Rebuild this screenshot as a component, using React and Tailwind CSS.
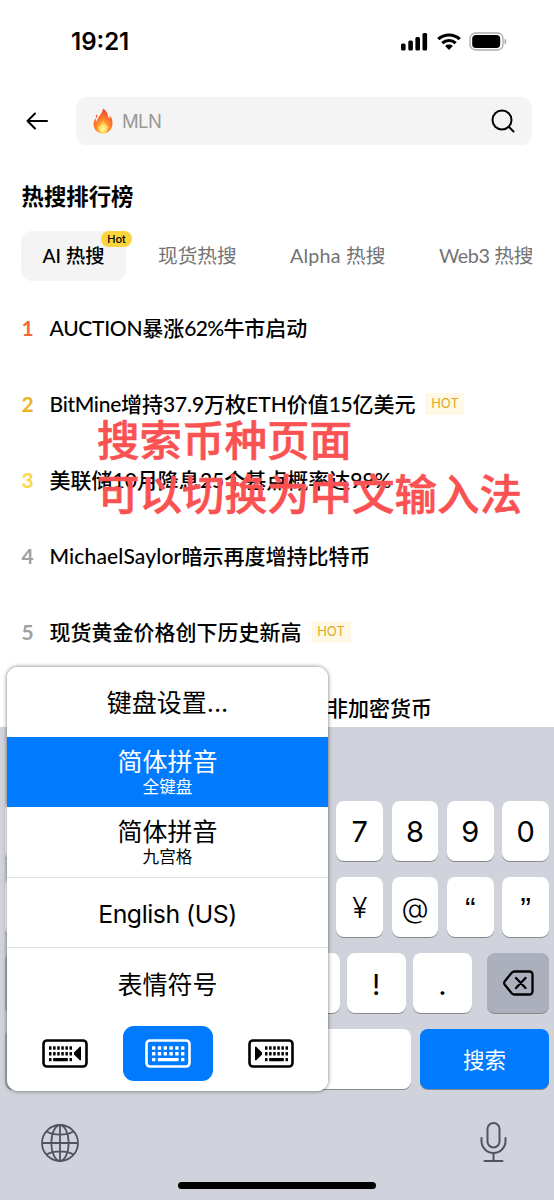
const hotTopics = [
  {
    rank: 1,
    color: 'text-[#f5693c]',
    parts: [
      ['AUCTION', 'tracking-[-0.3px]'],
      ['暴涨', ''],
      ['62%', 'tracking-[-0.7px]'],
      ['牛市启动', ''],
    ],
  },
  {
    rank: 2,
    color: 'text-[#eab41f]',
    hot: true,
    parts: [
      ['BitMine', 'tracking-[-0.3px]'],
      ['增持', ''],
      ['37.9', 'tracking-[-0.1px]'],
      ['万枚', ''],
      ['ETH', ''],
      ['价值', ''],
      ['15', 'tracking-[-0.3px]'],
      ['亿美元', ''],
    ],
  },
  {
    rank: 3,
    color: 'text-[#f8d748]',
    parts: [
      ['美联储', ''],
      ['10', ''],
      ['月降息', ''],
      ['25', ''],
      ['个基点概率达', ''],
      ['99%', ''],
    ],
  },
  {
    rank: 4,
    color: 'text-[#a0a0a0]',
    parts: [
      ['MichaelSaylor', 'tracking-[0.15px]'],
      ['暗示再度增持比特币', ''],
    ],
  },
  {
    rank: 5,
    color: 'text-[#a0a0a0]',
    hot: true,
    parts: [['现货黄金价格创下历史新高', '']],
  },
  {
    color: 'text-[#a0a0a0]',
    parts: [['非加密货币', 'ml-[305.5px]']],
  },
];

const StatusBar = () => (
  <div className="flex h-[83px] items-center justify-between pl-[71px] pr-[46px]">
    <span className="font-['Inter'] text-[24px] font-semibold">
      19:21
    </span>
    <div className="flex items-center gap-[8px]">
      <svg width="28" height="19" viewBox="0 0 28 19">
        <rect x="0" y="11.5" width="4.6" height="7" rx="1.5" />
        <rect x="7.3" y="8.5" width="4.6" height="10" rx="1.5" />
        <rect x="14.4" y="5" width="4.6" height="13.5" rx="1.5" />
        <rect x="21.5" y="1" width="4.6" height="17.5" rx="1.5" />
      </svg>
      <svg width="24" height="18" viewBox="0 0 22 18" preserveAspectRatio="none" fill="none" stroke="#000">
        <path d="M1.2 6.2C6.8.6 15.2.6 20.8 6.2" strokeWidth="3.1" />
        <path d="M4.9 10.1c3.5-3.5 8.7-3.5 12.2 0" strokeWidth="3" />
        <path d="M7.5 13c2-1.9 5-1.9 7 0L11 16.900z" fill="#000" stroke="none" />
      </svg>
      <svg width="39" height="19" viewBox="0 0 39 19">
        <rect x="1" y="1" width="33" height="17" rx="5.5" fill="none" stroke="#aaa" strokeWidth="1.3" />
        <rect x="3.2" y="3" width="28" height="13" rx="3.8" />
        <path d="M35.5 6.5c2.5 1 2.5 5 0 6z" fill="#aaa" />
      </svg>
    </div>
  </div>
);

const FireIcon = () => (
  <svg width="20" height="26" viewBox="0 0 20 26">
    <defs>
      <radialGradient id="fire" cx="0.5" cy="0.8" r="0.75">
        <stop offset="0" stopColor="#ffd23c" />
        <stop offset="0.45" stopColor="#ff8a2e" />
        <stop offset="1" stopColor="#f0442c" />
      </radialGradient>
      <radialGradient id="flame" cx="0.5" cy="0.7" r="0.6">
        <stop offset="0" stopColor="#fff9a8" />
        <stop offset="1" stopColor="#ffc52e" />
      </radialGradient>
    </defs>
    <path
      d="M10 .5c5 3 4.6 7 6.1 10.2C17 9.8 16.9 8.6 16.7 7.6 19 10.2 20 13.5 19.3 17.3 18.4 22.2 14.8 25.5 10 25.5 4.7 25.5.8 21.8.6 16.8.5 14 1.4 11.8 2.600 10.300c.2 1.500.6 2.500 1.300 3.300C4.100 8.500 9.400 6.800 10 .5z"
      fill="url(#fire)"
    />
    <path d="M3.8 6.2C5 7.6 4.3 9 3.2 10 2.4 8.7 3 7.5 3.8 6.2z" fill="#f0563a" />
    <path
      d="M10.6 12c.2 3 3 4 3.1 6.2.6-.5.8-1.100.9-1.700 1.300 3.700-.8 8.500-4.700 8.500-4 0-5.900-4-4.400-8.200.4.9.8 1.400 1.400 1.800C7.200 15.800 10.100 15 10.600 12z"
      fill="url(#flame)"
    />
  </svg>
);

const SearchBar = () => (
  <div className="mt-[14px] flex items-center pl-[26px] pr-[22px]">
    <svg className="mr-[28px]" width="22" height="18" viewBox="0 0 22 18" fill="none" stroke="#000" strokeWidth="2" strokeLinecap="round" strokeLinejoin="round">
      <path d="M21 9H1.500M9 1.500 1.500 9 9 16.500" />
    </svg>
    <div className="flex h-12 flex-1 items-center rounded-[11px] bg-[#f4f4f4] px-[17px]">
      <FireIcon />
      <span className="ml-[9px] mt-px flex-1 font-['Inter'] text-[18.5px] tracking-[-0.6px] text-[#989898]">
        MLN
      </span>
      <svg width="24" height="24" viewBox="0 0 24 24" fill="none" stroke="#000" strokeWidth="2" strokeLinecap="round">
        <circle cx="11" cy="11" r="9.5" />
        <path d="m18 18 4.500 4.500" />
      </svg>
    </div>
  </div>
);

const Tabs = () => (
  <div className="mt-[19px] flex h-[50px] items-center whitespace-nowrap pl-[21px] text-[19.7px] text-[#737373]">
    <div className="relative flex h-[50px] w-[105px] items-center justify-center rounded-[11px] bg-[#f4f4f4] text-[19.3px] font-medium text-black">
      AI 热搜
      <span className="absolute left-[80px] top-0 flex h-4 w-[31px] items-center justify-center rounded-full bg-[#fbd43b] font-['Inter'] text-[11px] font-medium">
        Hot
      </span>
    </div>
    <span className="ml-[32px] w-[132px]">现货热搜</span>
    <span className="w-[149px]">
      <span className="tracking-[0.2px]">Alpha </span>热搜
    </span>
    <span>
      <span className="tracking-[-0.4px]">Web3 </span>热搜
    </span>
  </div>
);

const HotTopic = ({ topic }) => (
  <div className="flex h-[76px] items-center whitespace-nowrap pl-[21.5px]">
    {topic.rank && (
      <span className={`w-[28px] text-[21px] font-bold ${topic.color}`}>
        {topic.rank}
      </span>
    )}
    <span className="text-[21px] font-medium text-black">
      {topic.parts.map(([text, style]) => (
        <span key={text} className={style || undefined}>
          {text}
        </span>
      ))}
    </span>
    {topic.hot && (
      <span className="ml-[10px] flex h-[22px] w-[39px] items-center justify-center bg-[#fff8e6] font-['Inter'] text-[13px] text-[#dda91c]">
        HOT
      </span>
    )}
  </div>
);

const Key = ({ children, className = '' }) => (
  <div
    className={`flex h-[60px] items-center justify-center rounded-[8px] shadow-[0_1px_0_#868a8f] ${className || 'flex-1 bg-white'}`}
  >
    {children}
  </div>
);

const Keyboard = () => (
  <div className="relative h-[473px] bg-[#d0d3db] px-[5px] pt-[74px] font-['Inter','Noto_Sans_CJK_SC',sans-serif] text-[29px] text-black">
    <div className="flex flex-col gap-4">
      <div className="flex gap-[8.4px]">
        {['', '', '', '', '', '', '7', '8', '9', '0'].map((key, i) => (
          <Key key={i}>
            <span className="mt-0.5">{key}</span>
          </Key>
        ))}
      </div>
      <div className="flex gap-[8.4px]">
        {['', '', '', '', '', '', '¥', '@'].map((key, i) => (
          <Key key={i}>
            <span className="mt-0.5 text-[28px] font-[350]">{key}</span>
          </Key>
        ))}
        {['“', '”'].map((key) => (
          <Key key={key}>
            <span className="mt-1 font-['Liberation_Sans'] text-[32px]">{key}</span>
          </Key>
        ))}
      </div>
      <div className="flex gap-[15px]">
        <Key className="w-[62px] bg-[#abb0bc]" />
        <div className="flex flex-1 gap-[7px]">
          {['', '', '', '', '!', '.'].map((key, i) => (
            <Key key={i}>
              <span className="mt-1">{key}</span>
            </Key>
          ))}
        </div>
        <Key className="w-[62px] bg-[#abb0bc]">
          <svg width="31" height="26" viewBox="0 0 31 26" fill="none" stroke="#000" strokeWidth="2.3" strokeLinecap="round" strokeLinejoin="round">
            <path d="M11.5 1.5h15a3 3 0 0 1 3 3v17a3 3 0 0 1-3 3h-15a4 4 0 0 1-2.800-1.200L2 15a2.800 2.800 0 0 1 0-4l6.700-8.300a4 4 0 0 1 2.800-1.200zM13 8l9.500 10M22.500 8 13 18" />
          </svg>
        </Key>
      </div>
      <div className="flex gap-[9px]">
        <Key className="w-[129px] bg-[#abb0bc]" />
        <Key />
        <Key className="w-[129px] bg-[#007aff] text-[21.5px] text-white">
          <span className="mt-0.5">搜索</span>
        </Key>
      </div>
    </div>
    <div className="mt-[33px] flex items-start justify-between pl-[36px] pr-[42px]">
      <svg className="mt-0.5" width="38" height="38" viewBox="0 0 38 38" fill="none" stroke="#50545c" strokeWidth="1.8">
        <circle cx="19" cy="19" r="18" />
        <ellipse cx="19" cy="19" rx="8.7" ry="18" />
        <path d="M19 1v36M1 19h36M5.5 7.500c7.500 4.200 19.500 4.200 27 0M5.500 30.500c7.500-4.200 19.500-4.200 27 0" />
      </svg>
      <svg width="27" height="40" viewBox="0 0 27 40" fill="none" stroke="#50545c" strokeWidth="2" strokeLinecap="round">
        <rect x="7.5" y="1" width="12" height="24.5" rx="6" />
        <path d="M1.500 16v3a12 12 0 0 0 24 0v-3M13.500 31v8M4.500 39h18" />
      </svg>
    </div>
    <div className="absolute bottom-[11px] left-[178px] h-[7px] w-[198px] rounded-full bg-black" />
  </div>
);

const KeyboardIcon = ({ dock }) => {
  // a docked keyboard is squeezed to one side to leave room for the arrow
  const start = dock === 'right' ? 17 : 7;
  const step = dock ? 4.1 : 5.8;
  const size = dock ? 2.5 : 3.4;
  const columns = [0, 1, 2, 3, 4, 5];

  return (
    <svg width="46" height="29" viewBox="0 0 46 29" fill="currentColor">
      <rect x="1.5" y="1.5" width="43" height="26" rx="3.5" fill="none" stroke="currentColor" strokeWidth="2.6" />
      {[7.3, 13.1].map((y) =>
        columns.map((column) => (
          <rect key={`${y}-${column}`} x={start + column * step} y={y} width={size} height="3.4" rx="0.5" />
        ))
      )}
      <rect x={start} y="18.9" width={size} height="3.4" rx="0.5" />
      <rect x={start + step} y="18.9" width={step * 3 + size} height="3.4" rx="0.5" />
      <rect x={start + step * 5} y="18.9" width={size} height="3.4" rx="0.5" />
      {dock === 'left' && <path d="M39 8v13l-1 .5-6-6v-2l6-6z" />}
      {dock === 'right' && <path d="M7 8v13l1 .5 6-6v-2l-6-6z" />}
    </svg>
  );
};

const KeyboardMenu = () => (
  <div className="absolute left-[7px] top-[667px] h-[424px] w-[321px] overflow-hidden rounded-[11px] bg-white font-['Inter','Noto_Sans_CJK_SC',sans-serif] text-[25px] leading-[30px] text-black">
    <div className="flex h-[70px] items-center justify-center pt-0.5">键盘设置...</div>
    <div className="flex h-[70px] flex-col items-center justify-center bg-[#007aff] text-white">
      <span>简体拼音</span>
      <span className="text-[16.6px] leading-5">全键盘</span>
    </div>
    <div className="flex h-[71px] flex-col items-center justify-center border-b border-[#e2e2e2]">
      <span>简体拼音</span>
      <span className="text-[16.6px] leading-5">九宫格</span>
    </div>
    <div className="flex h-[70px] items-center justify-center border-b border-[#e2e2e2] pt-0.5 text-[24.8px] tracking-[-0.45px]">
      English (US)
    </div>
    <div className="flex h-[72px] items-center justify-center pt-0.5">表情符号</div>
    <div className="mt-[6px] flex h-[55px] items-center justify-between pl-[35px] pr-[34px]">
      <KeyboardIcon dock="left" />
      <div className="flex h-[55px] w-[90px] items-center justify-center rounded-[11px] bg-[#007aff] text-white">
        <KeyboardIcon />
      </div>
      <KeyboardIcon dock="right" />
    </div>
  </div>
);

export default function App() {
  return (
    <div className="relative h-[1200px] w-[554px] overflow-hidden bg-white font-['Lato','Noto_Sans_CJK_SC',sans-serif] text-black">
      <div className="h-[727px] overflow-hidden">
        <StatusBar />
        <SearchBar />
        <h1 className="mt-[36px] pl-[21.5px] text-[22.4px] font-bold leading-[31px]">
          热搜排行榜
        </h1>
        <Tabs />
        <div className="mt-[9px]">
          {hotTopics.map((topic, i) => (
            <HotTopic key={i} topic={topic} />
          ))}
        </div>
      </div>
      <Keyboard />
      <div className="absolute left-[7px] top-[667px] h-[424px] w-[321px] rounded-[11px] shadow-[0_0_4px_rgba(0,0,0,0.55)]" />
      <KeyboardMenu />
      <p className="absolute left-[97px] top-[413px] whitespace-nowrap text-[42.5px] font-medium leading-[54px] text-[#fa5252] [-webkit-text-stroke:0.6px_#fa5252]">
        搜索币种页面
        <br />
        可以切换为中文输入法
      </p>
    </div>
  );
}
